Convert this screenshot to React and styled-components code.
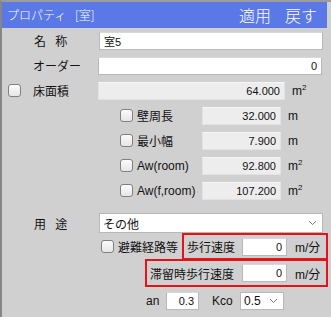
import React from "react";
import styled, { createGlobalStyle } from "styled-components";

const GlobalStyle = createGlobalStyle`
    html, body {
        margin: 0;
        padding: 0;
        background: #d0d0d0;
    }
    body {
        font-family: "Liberation Sans", "Noto Sans CJK JP", sans-serif;
        font-size: 12px;
        color: #111;
    }
`;

const App = () => {
    return (
        <>
            <GlobalStyle />
            <Frame>
                <TitleBar>
                    <Title>プロパティ [室]</Title>
                    <Actions>
                        <Action>適用</Action>
                        <Action>戻す</Action>
                    </Actions>
                </TitleBar>

                <Row>
                    <CheckSlot />
                    <Label spaced>名 称</Label>
                    <Input left value="室5" />
                </Row>
                <Row>
                    <CheckSlot />
                    <Label>オーダー</Label>
                    <Input value="0" />
                </Row>
                <Row>
                    <CheckSlot><Check /></CheckSlot>
                    <Label>床面積</Label>
                    <Input readOnly width="187px" value="64.000" />
                    <Unit>m<sup>2</sup></Unit>
                </Row>

                {[
                    ["壁周長", "32.000", "m"],
                    ["最小幅", "7.900", "m"],
                    ["Aw(room)", "92.800", "m2"],
                    ["Aw(f,room)", "107.200", "m2"],
                ].map(([name, val, unit]) => (
                    <SubRow key={name}>
                        <Check />
                        <SubLabel>{name}</SubLabel>
                        <Input readOnly width="79px" value={val} />
                        <Unit>{unit === "m2" ? <>m<sup>2</sup></> : "m"}</Unit>
                    </SubRow>
                ))}

                <Row top="9px" height="22px">
                    <CheckSlot />
                    <Label spaced>用 途</Label>
                    <Select>
                        <span>その他</span>
                        <Chevron />
                    </Select>
                </Row>

                <BoxRow height="27px" pad="99px">
                    <Check />
                    <SubLabel>避難経路等</SubLabel>
                    <RedBox width="148px">
                        <BoxLabel>歩行速度</BoxLabel>
                        <Input width="45px" value="0" />
                        <BoxUnit>m/分</BoxUnit>
                    </RedBox>
                </BoxRow>
                <BoxRow height="28px" pad="143px">
                    <RedBox width="183px">
                        <BoxLabel>滞留時歩行速度</BoxLabel>
                        <Input width="45px" value="0" />
                        <BoxUnit>m/分</BoxUnit>
                    </RedBox>
                </BoxRow>

                <SmallRow>
                    <SmallLabel>an</SmallLabel>
                    <Input width="33px" value="0.3" />
                    <SmallLabel gap="13px" w="28px">Kco</SmallLabel>
                    <Select width="44px">
                        <span>0.5</span>
                        <Chevron />
                    </Select>
                </SmallRow>
            </Frame>
        </>
    );
};

const Chevron = () => (
    <svg width="9" height="6" viewBox="0 0 9 6">
        <path d="M1 1 L4.5 4.5 L8 1" fill="none" stroke="#7a7a7a" strokeWidth="1" />
    </svg>
);

const Frame = styled.div`
    width: 331px;
    height: 317px;
    box-sizing: border-box;
    border-top: 2px solid #9c9c9c;
    border-left: 2px solid #868686;
    overflow: hidden;
`;

const TitleBar = styled.div`
    width: 325px;
    height: 26px;
    background: #5a78e6;
    color: #fff;
    display: flex;
    align-items: center;
    justify-content: space-between;
    padding: 0 10px 0 5px;
    box-sizing: border-box;
`;

const Title = styled.div`
    font-size: 12px;
    font-weight: 300;
    word-spacing: 6px;
    font-family: "Noto Sans CJK JP", sans-serif;
    padding-bottom: 1px;
`;

const Actions = styled.div`
    display: flex;
    gap: 14px;
`;

const Action = styled.span`
    font-size: 16px;
    font-weight: 300;
    font-family: "Noto Sans CJK JP", sans-serif;
    line-height: 1;
`;

const Row = styled.div`
    display: flex;
    align-items: center;
    height: ${(p) => p.height || "25px"};
    margin-top: ${(p) => p.top || "0"};
    padding-left: 6px;
`;

const CheckSlot = styled.div`
    width: 25px;
    display: flex;
    align-items: center;
`;

const Check = styled.span`
    display: inline-block;
    width: 13px;
    height: 13px;
    box-sizing: border-box;
    border: 1px solid #808080;
    border-radius: 3px;
    background: linear-gradient(#fbfbfb, #e6e6e6);
    flex-shrink: 0;
`;

const Label = styled.div`
    width: 65px;
    font-size: 12px;
    word-spacing: ${(p) => (p.spaced ? "6px" : "0")};
    padding-left: ${(p) => (p.spaced ? "1px" : "0")};
`;

const Input = styled.input.attrs({ type: "text" })`
    width: ${(p) => p.width || "224px"};
    height: 18px;
    box-sizing: border-box;
    border: 1px solid ${(p) => (p.readOnly ? "#e2e2e2" : "#b8b8b8")};
    border-top-color: ${(p) => (p.readOnly ? "#f6f6f6" : "#d8d8d8")};
    background: ${(p) => (p.readOnly ? "#ededed" : "#fff")};
    font-family: "Liberation Sans", "Noto Sans CJK JP", sans-serif;
    font-size: 11px;
    text-align: ${(p) => (p.left ? "left" : "right")};
    padding: 0 4px;
    color: #111;
    outline: none;
    flex-shrink: 0;
`;

const Unit = styled.div`
    width: 39px;
    padding-left: 7px;
    box-sizing: border-box;
    font-size: 12px;
    sup {
        font-size: 8px;
        vertical-align: 5px;
        line-height: 0;
    }
`;

const SubRow = styled.div`
    display: flex;
    align-items: center;
    height: 25px;
    padding-left: 118px;
`;

const SubLabel = styled.div`
    width: ${(p) => p.width || "69px"};
    padding-left: 4px;
    box-sizing: border-box;
    font-size: 12px;
    white-space: nowrap;
`;

const Select = styled.div`
    width: ${(p) => p.width || "224px"};
    height: ${(p) => (p.width ? "18px" : "20px")};
    box-sizing: border-box;
    background: #fff;
    border: 1px solid #b8b8b8;
    display: flex;
    align-items: center;
    justify-content: space-between;
    padding: 0 5px 0 3px;
    font-size: 12px;
    font-family: "Liberation Sans", "Noto Sans CJK JP", sans-serif;
    flex-shrink: 0;
`;

const BoxRow = styled.div`
    display: flex;
    align-items: center;
    height: ${(p) => p.height};
    padding-left: ${(p) => p.pad};
    padding-right: 3px;
    margin-top: -1px;
`;

const RedBox = styled.div`
    margin-left: auto;
    width: ${(p) => p.width};
    height: 100%;
    box-sizing: border-box;
    border: 2px solid #e3131c;
    display: flex;
    align-items: center;
    padding-left: 3px;
`;

const BoxLabel = styled.div`
    flex: 1;
    font-size: 12px;
    white-space: nowrap;
`;

const BoxUnit = styled.div`
    width: 39px;
    padding-left: 8px;
    box-sizing: border-box;
    font-size: 12px;
`;

const SmallRow = styled.div`
    display: flex;
    align-items: center;
    height: 28px;
    padding-left: 144px;
`;

const SmallLabel = styled.div`
    width: ${(p) => p.w || "20px"};
    margin-left: ${(p) => p.gap || "0"};
    font-size: 12px;
`;

export default App;
